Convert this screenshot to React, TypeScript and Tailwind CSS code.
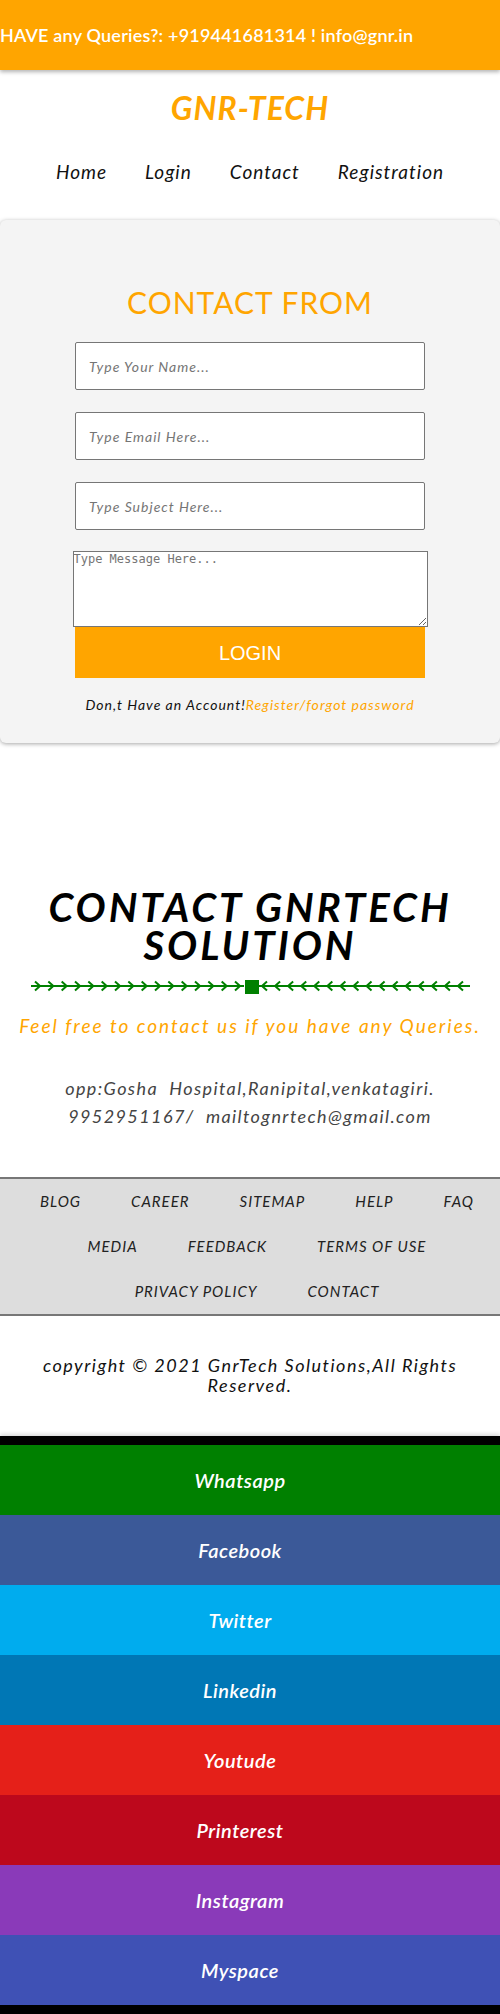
import React from "react";

const font = { fontFamily: "Lato, 'Open Sans', sans-serif" };

function Divider() {
  const left = Array.from({ length: 16 }, (_, k) => 40 + (200 / 15) * k);
  const right = Array.from({ length: 16 }, (_, k) => 262 + (196 / 15) * k);
  return (
    <svg width="500" height="22" viewBox="0 0 500 22" className="block">
      <line x1="31" y1="10" x2="244" y2="10" stroke="#008000" strokeWidth="2" />
      <line x1="259" y1="10" x2="470" y2="10" stroke="#008000" strokeWidth="2" />
      {left.map((x, i) => (
        <polyline key={"l" + i} points={`${x - 5},5.5 ${x},10 ${x - 5},14.5`} fill="none" stroke="#008000" strokeWidth="2" />
      ))}
      {right.map((x, i) => (
        <polyline key={"r" + i} points={`${x + 5},5.5 ${x},10 ${x + 5},14.5`} fill="none" stroke="#008000" strokeWidth="2" />
      ))}
      <rect x="245" y="4" width="14" height="14" fill="#008000" />
    </svg>
  );
}

const socials: [string, string][] = [
  ["Whatsapp", "bg-[#008000]"],
  ["Facebook", "bg-[#3b5998]"],
  ["Twitter", "bg-[#00acee]"],
  ["Linkedin", "bg-[#0077b5]"],
  ["Youtude", "bg-[#e52019]"],
  ["Printerest", "bg-[#bd081c]"],
  ["Instagram", "bg-[#8a3ab9]"],
  ["Myspace", "bg-[#3f51b5]"],
];

const footerRows = [
  ["BLOG", "CAREER", "SITEMAP", "HELP", "FAQ"],
  ["MEDIA", "FEEDBACK", "TERMS OF USE"],
  ["PRIVACY POLICY", "CONTACT"],
];

export default function App() {
  return (
    <div className="w-[500px] bg-white" style={font}>
      <div className="h-[70px] bg-[#ffa500] flex items-center text-white text-[18px] tracking-[0.2px] font-semibold whitespace-nowrap shadow-[0_2px_4px_rgba(0,0,0,0.3)] relative">
        HAVE any Queries?: +919441681314 ! info@gnr.in
      </div>
      <div className="mt-[22px] text-center text-[#ffa500] text-[32px] leading-[32px] font-bold italic tracking-[1px]">GNR-TECH</div>
      <nav className="mt-[36px] flex justify-center gap-[38px] text-[19px] leading-[24px] italic text-[#111] tracking-[1px]">
        <span>Home</span>
        <span>Login</span>
        <span>Contact</span>
        <span>Registration</span>
      </nav>
      <div className="mt-[36px] bg-[#f4f4f4] rounded-[6px] shadow-[0_1px_4px_rgba(0,0,0,0.35)] pt-[64px] pb-[28px]">
        <h2 className="text-center text-[#ffa500] text-[30px] leading-[36px] tracking-[1px]">CONTACT FROM</h2>
        <div className="mt-[22px] flex flex-col items-center">
          {["Type Your Name...", "Type Email Here...", "Type Subject Here..."].map((p, i) => (
            <input
              key={p}
              placeholder={p}
              className={`w-[350px] h-[48px] bg-white border border-[#767676] rounded-[2px] pl-[13px] text-[14px] italic tracking-[1px] placeholder:text-[#757575] ${i > 0 ? "mt-[22px]" : ""}`}
              style={font}
            />
          ))}
          <textarea
            placeholder="Type Message Here..."
            className="mt-[21px] w-[355px] h-[76px] bg-white border border-[#767676] text-[12px] leading-[15px] placeholder:text-[#757575] resize"
            style={{ fontFamily: "'DejaVu Sans Mono', monospace" }}
          />
          <button className="w-[350px] h-[51px] bg-[#ffa500] text-white text-[20px]" style={{ fontFamily: "'Liberation Sans', Arial, sans-serif" }}>
            LOGIN
          </button>
          <p className="mt-[17px] text-[14px] leading-[20px] italic text-[#111] tracking-[1px] whitespace-nowrap">
            Don,t Have an Account!<span className="text-[#ffa500]">Register/forgot password</span>
          </p>
        </div>
      </div>
      <h1 className="mt-[145px] text-center text-[40px] leading-[38px] font-bold italic text-black tracking-[3px]">
        CONTACT GNRTECH
        <br />
        SOLUTION
      </h1>
      <div className="mt-[12px]">
        <Divider />
      </div>
      <p className="mt-[16px] text-center text-[19px] leading-[24px] italic text-[#ffa500] whitespace-nowrap tracking-[2px]">
        Feel free to contact us if you have any Queries.
      </p>
      <div className="mt-[36px] text-center text-[18px] leading-[28px] italic text-[#444] tracking-[1.4px]">
        <div>opp:Gosha&nbsp; Hospital,Ranipital,venkatagiri.</div>
        <div>9952951167/&nbsp; mailtognrtech@gmail.com</div>
      </div>
      <div className="mt-[47px] bg-[#dddddd] border-y-2 border-[#777] pl-[14px] flex flex-col text-[15px] leading-[45px] italic text-[#222] tracking-[1px]">
        {footerRows.map((row, i) => (
          <div key={i} className="flex justify-center gap-x-[50px] whitespace-nowrap">
            {row.map((t) => (
              <span key={t}>{t}</span>
            ))}
          </div>
        ))}
      </div>
      <p className="mt-[39px] px-[30px] text-center text-[18px] leading-[20px] italic text-[#111] tracking-[1.5px]">
        copyright © 2021 GnrTech Solutions,All Rights Reserved.
      </p>
      <div className="mt-[41px] bg-black pt-[9px] pb-[9px] shadow-[0_-2px_4px_rgba(0,0,0,0.15)]">
        {socials.map(([name, bg]) => (
          <div key={name} className={`${bg} h-[70px] flex items-center justify-center pr-[20px] text-white text-[20px] font-semibold italic tracking-[0.5px]`}>
            {name}
          </div>
        ))}
      </div>
    </div>
  );
}
